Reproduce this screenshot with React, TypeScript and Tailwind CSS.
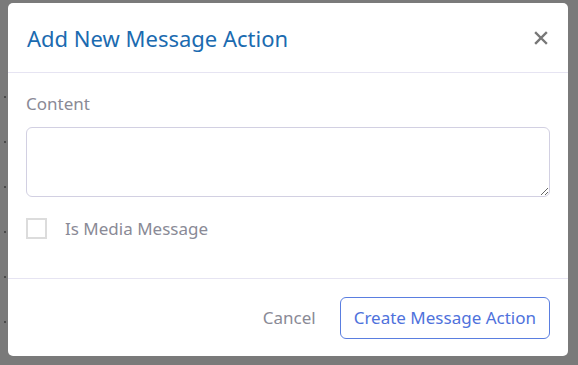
export default function App() {
  return (
    <div className="relative h-[365px] w-[578px] overflow-hidden bg-[#7a7a7a] pl-[8px] pt-[3px] font-['Noto_Sans',sans-serif]">
      <div className="absolute left-[4px] top-[96px] flex flex-col gap-[43px]">
        {[0, 1, 2, 3, 4, 5].map((i) => (
          <span key={i} className="block h-[2px] w-[2px] bg-[#4a4a4a]" />
        ))}
      </div>
      <div className="relative flex h-[353px] w-[560px] flex-col rounded-[5px] bg-white">
        <div className="flex h-[70px] items-center justify-between border-b border-[#e6e4f2] pl-[19px] pr-[20px]">
          <h1 className="text-[22px] leading-none text-[#1b6bb0]">Add New Message Action</h1>
          <button className="text-[#777]">
            <svg width="14" height="14" viewBox="0 0 14 14">
              <path d="M2 2L12 12M12 2L2 12" stroke="currentColor" strokeWidth="2.4" strokeLinecap="square" />
            </svg>
          </button>
        </div>
        <div className="flex h-[206px] flex-col border-b border-[#e6e4f2] px-[18px] pt-[19px]">
          <label className="text-[17px] leading-[24px] text-[#8a8a96]">Content</label>
          <textarea className="mt-[11px] h-[70px] w-[524px] resize-y rounded-[6px] border border-[#d2d0e2] outline-none" />
          <label className="mt-[19px] flex items-center">
            <span className="h-[21px] w-[21px] border-2 border-[#dcdcdc]" />
            <span className="ml-[18px] text-[17px] text-[#8a8a96]">Is Media Message</span>
          </label>
        </div>
        <div className="flex flex-1 items-center justify-end gap-[24px] pr-[18px]">
          <button className="text-[17px] text-[#8a8a96]">Cancel</button>
          <button className="h-[42px] rounded-[6px] border border-[#5a7ee0] px-[13px] text-[17px] text-[#4f72dc]">
            Create Message Action
          </button>
        </div>
      </div>
    </div>
  );
}
